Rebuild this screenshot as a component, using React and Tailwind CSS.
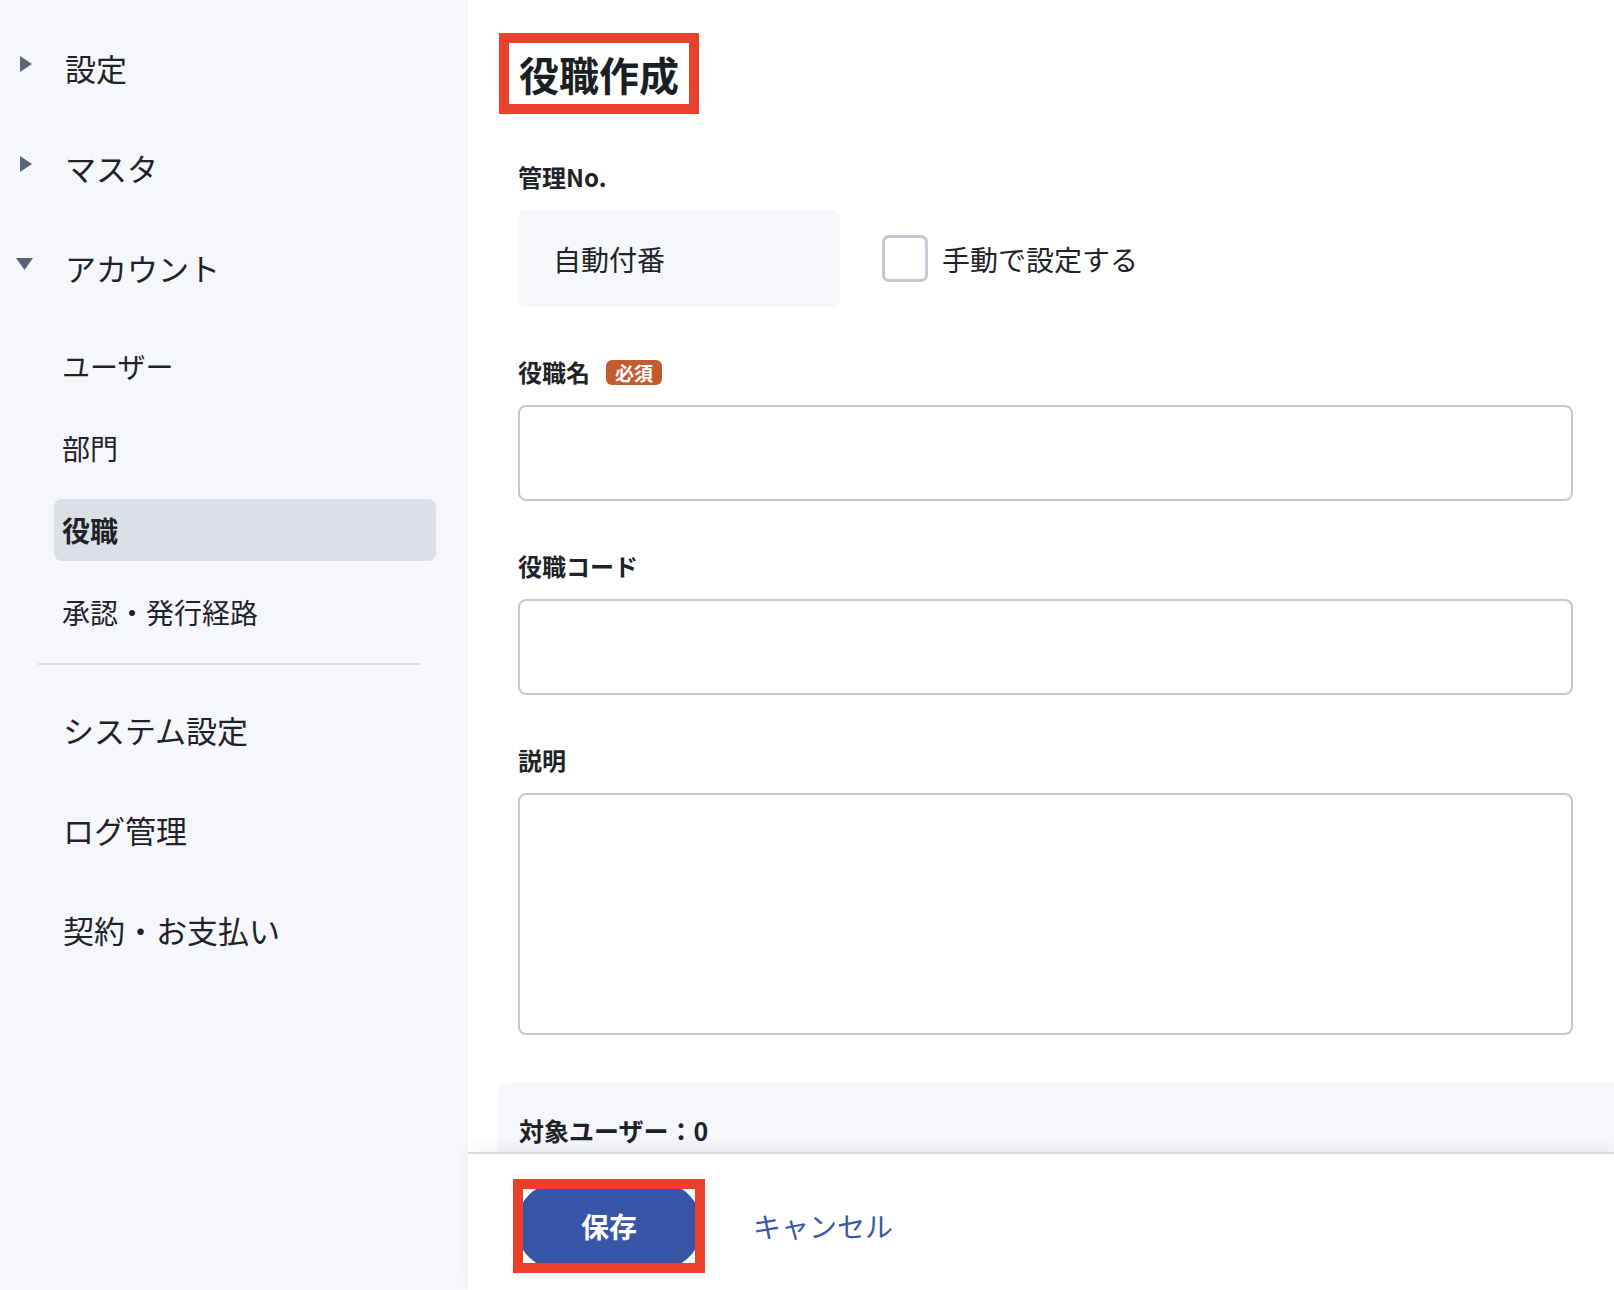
import React from "react";

const FONT = { fontFamily: '"Noto Sans CJK JP", "Noto Sans", sans-serif' };

function TriRight() {
  return (
    <svg width="12" height="16" viewBox="0 0 12 16" className="block">
      <path d="M0 0 L12 8 L0 16 Z" fill="#5b6579" />
    </svg>
  );
}
function TriDown() {
  return (
    <svg width="17" height="12" viewBox="0 0 17 12" className="block">
      <path d="M0 0 L17 0 L8.5 12 Z" fill="#5b6579" />
    </svg>
  );
}

function TopItem({ icon, label, iconPad }) {
  return (
    <div className="h-[100px] flex items-center">
      <div className={`w-[65px] flex -mt-[6px] ${iconPad}`}>{icon}</div>
      <span className="text-[31px] text-[#1f2329] leading-none">{label}</span>
    </div>
  );
}

function SubItem({ label, active }) {
  return (
    <div className="h-[82px] flex items-center">
      <div
        className={`ml-[54px] w-[382px] h-[62px] rounded-[8px] pl-[8px] flex items-center text-[28px] text-[#1f2329] ${
          active ? "bg-[#dcdfe6] font-bold" : ""
        }`}
      >
        {label}
      </div>
    </div>
  );
}

function BottomItem({ label }) {
  return (
    <div className="h-[100px] flex items-center pl-[63px]">
      <span className="text-[31px] text-[#1f2329] leading-none">{label}</span>
    </div>
  );
}

function Label({ children }) {
  return (
    <div className="h-[36px] flex items-center text-[24px] font-bold text-[#1f2328] mb-[15px]">
      {children}
    </div>
  );
}

export default function App() {
  return (
    <div className="w-full h-[1290px] flex overflow-hidden bg-white" style={FONT}>
      {/* Sidebar */}
      <aside className="w-[468px] shrink-0 bg-[#f5f7fa] pt-[17px]">
        <TopItem icon={<TriRight />} label="設定" iconPad="pl-[20px]" />
        <TopItem icon={<TriRight />} label="マスタ" iconPad="pl-[20px]" />
        <TopItem icon={<TriDown />} label="アカウント" iconPad="pl-[16px]" />
        <div className="mt-[8px]">
          <SubItem label="ユーザー" />
          <SubItem label="部門" />
          <SubItem label="役職" active />
          <SubItem label="承認・発行経路" />
        </div>
        <div className="mt-[10px] ml-[38px] w-[382px] h-[2px] bg-[#dde1e7]" />
        <div className="mt-[14px]">
          <BottomItem label="システム設定" />
          <BottomItem label="ログ管理" />
          <BottomItem label="契約・お支払い" />
        </div>
      </aside>

      {/* Main */}
      <main className="flex-1 flex flex-col min-w-0">
        <div className="flex-1 overflow-hidden pl-[50px] pr-[41px]">
          {/* Title */}
          <div className="mt-[33px] -ml-[19px] inline-flex border-[10px] border-[#e8402a] bg-white px-[10px] h-[81px] items-center">
            <h1 className="text-[40px] font-bold text-[#1b1f24] leading-none">役職作成</h1>
          </div>

          {/* 管理No. */}
          <div className="mt-[45px]">
            <Label>管理No.</Label>
            <div className="flex items-center">
              <div className="w-[322px] h-[97px] rounded-[8px] bg-[#f5f7fa] flex items-center pl-[35px] text-[28px] text-[#1f2328]">
                自動付番
              </div>
              <div className="ml-[42px] w-[46px] h-[47px] rounded-[7px] border-[3px] border-[#c3c9d3] bg-white" />
              <span className="ml-[14px] text-[28px] text-[#1f2328]">手動で設定する</span>
            </div>
          </div>

          {/* 役職名 */}
          <div className="mt-[47px]">
            <Label>
              役職名
              <span className="ml-[16px] h-[25px] px-[9px] rounded-[6px] bg-[#c45b2e] text-white text-[19px] font-bold flex items-center leading-none">
                必須
              </span>
            </Label>
            <div className="h-[96px] rounded-[8px] border-2 border-[#c3c9d4] bg-white" />
          </div>

          {/* 役職コード */}
          <div className="mt-[47px]">
            <Label>役職コード</Label>
            <div className="h-[96px] rounded-[8px] border-2 border-[#c3c9d4] bg-white" />
          </div>

          {/* 説明 */}
          <div className="mt-[47px]">
            <Label>説明</Label>
            <div className="h-[242px] rounded-[8px] border-2 border-[#c3c9d4] bg-white" />
          </div>

          {/* Target users panel */}
          <div className="mt-[48px] -ml-[20px] -mr-[41px] rounded-tl-[10px] bg-[#f5f7fa] pt-[30px] pl-[21px] h-[200px]">
            <div className="h-[36px] flex items-center text-[25px] font-bold text-[#1f2328]">
              対象ユーザー：0
            </div>
          </div>
        </div>

        {/* Footer */}
        <footer className="relative z-10 h-[138px] shrink-0 bg-white border-t-2 border-[#d8dce3] shadow-[0_-6px_14px_rgba(30,40,60,0.05)] pl-[45px] pt-[25px] flex items-start">
          <div className="w-[192px] h-[94px] border-[10px] border-[#e8402a] overflow-hidden bg-white">
            <button className="-m-[7px] w-[186px] h-[88px] rounded-full bg-[#3955a7] text-white text-[28px] font-bold flex items-center justify-center">
              保存
            </button>
          </div>
          <button className="ml-[48px] h-[94px] flex items-center text-[28px] text-[#3a58a8]">
            キャンセル
          </button>
        </footer>
      </main>
    </div>
  );
}
